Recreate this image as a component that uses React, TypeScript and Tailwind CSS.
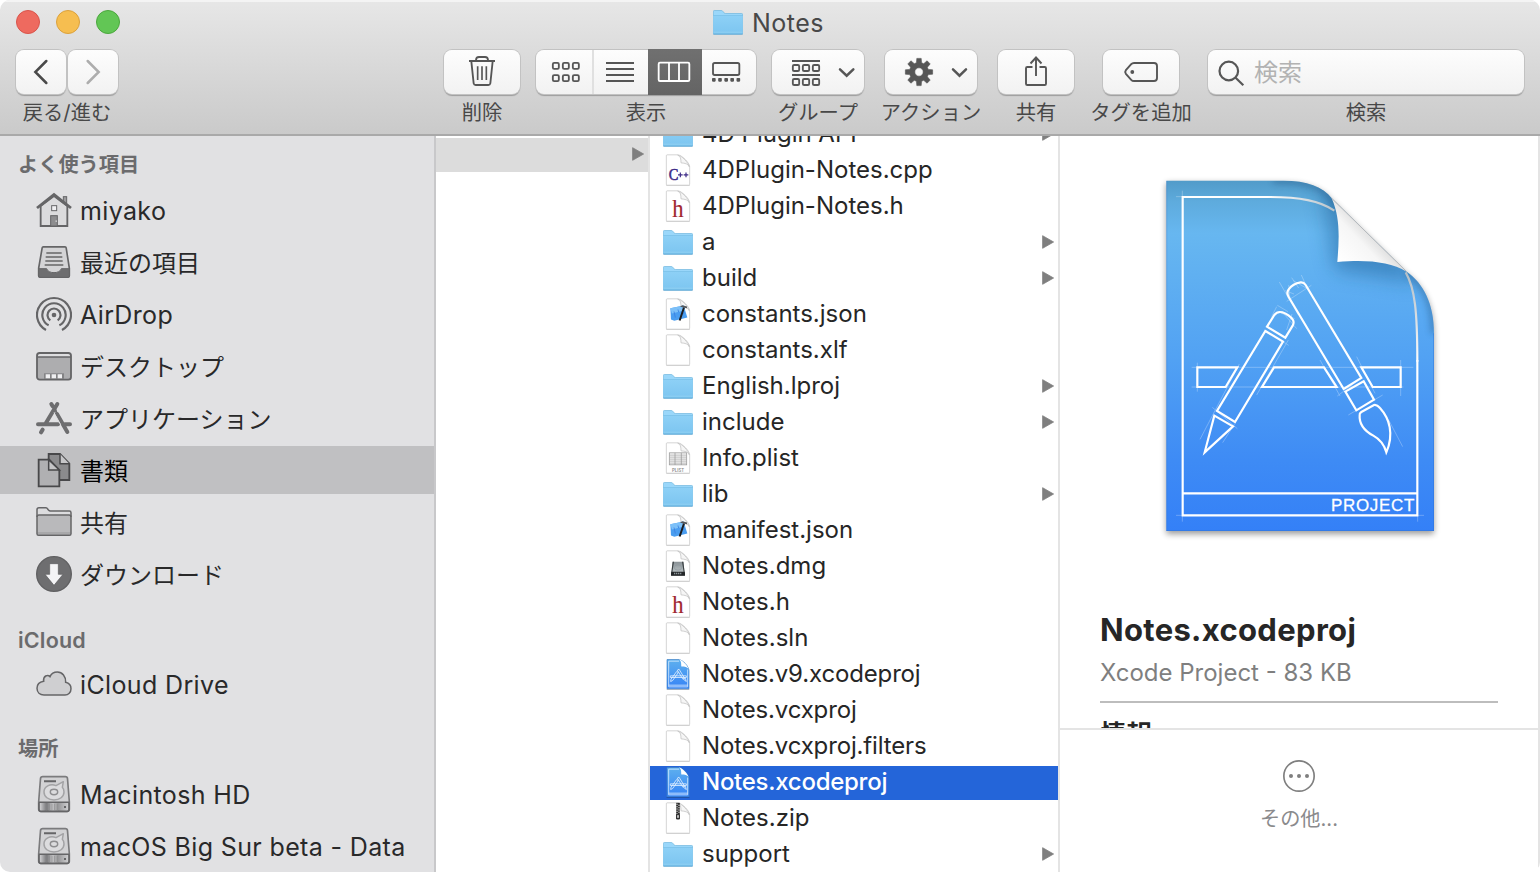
import React from "react";

type FileKind = "folder" | "cpp" | "h" | "json" | "blank" | "plist" | "dmg" | "xcode" | "zip";

const files: { name: string; kind: FileKind; selected?: boolean; tight?: boolean }[] = [
  { name: "4D Plugin API", kind: "folder" },
  { name: "4DPlugin-Notes.cpp", kind: "cpp" },
  { name: "4DPlugin-Notes.h", kind: "h" },
  { name: "a", kind: "folder" },
  { name: "build", kind: "folder" },
  { name: "constants.json", kind: "json" },
  { name: "constants.xlf", kind: "blank" },
  { name: "English.lproj", kind: "folder" },
  { name: "include", kind: "folder" },
  { name: "Info.plist", kind: "plist" },
  { name: "lib", kind: "folder" },
  { name: "manifest.json", kind: "json" },
  { name: "Notes.dmg", kind: "dmg" },
  { name: "Notes.h", kind: "h" },
  { name: "Notes.sln", kind: "blank" },
  { name: "Notes.v9.xcodeproj", kind: "xcode", tight: true },
  { name: "Notes.vcxproj", kind: "blank", tight: true },
  { name: "Notes.vcxproj.filters", kind: "blank", tight: true },
  { name: "Notes.xcodeproj", kind: "xcode", selected: true },
  { name: "Notes.zip", kind: "zip" },
  { name: "support", kind: "folder" },
];

function Defs() {
  return (
    <svg className="absolute h-0 w-0" aria-hidden="true">
      <defs>
        <linearGradient id="folderBody" x1="0" y1="0" x2="0" y2="1">
          <stop offset="0" stopColor="#8dd0f6" />
          <stop offset="1" stopColor="#7cc5f0" />
        </linearGradient>
        <linearGradient id="miniBlue" x1="0" y1="0" x2="0" y2="1">
          <stop offset="0" stopColor="#5eb0ee" />
          <stop offset="1" stopColor="#3583f6" />
        </linearGradient>
        <linearGradient id="driveMetal" x1="0" y1="0" x2="0" y2="1">
          <stop offset="0" stopColor="#8a9296" />
          <stop offset="0.7" stopColor="#b4bcbf" />
          <stop offset="1" stopColor="#4a4f52" />
        </linearGradient>
        <linearGradient id="driveBase" x1="0" y1="0" x2="1" y2="0">
          <stop offset="0" stopColor="#d6d6d8" />
          <stop offset="0.25" stopColor="#77777a" />
          <stop offset="0.45" stopColor="#c4c4c6" />
          <stop offset="0.65" stopColor="#99999b" />
          <stop offset="1" stopColor="#d0d0d2" />
        </linearGradient>
      </defs>
    </svg>
  );
}

function FolderShape() {
  return (
    <g>
      <rect x="1" y="84" width="88" height="4" rx="2" fill="#00000030" />
      <path d="M1 18Q1 15 4 15H25Q28 15 30 18L33 22Q35 24 38 24H86Q89 24 89 27V84Q89 86 87 86H3Q1 86 1 84Z" fill="#9ad7fa" stroke="#6bb3dd" strokeWidth="2" />
      <path d="M1 31H89V84Q89 86 87 86H3Q1 86 1 84Z" fill="url(#folderBody)" />
      <path d="M1 30H89" stroke="#74bce6" strokeWidth="2" />
      <path d="M2 80H88" stroke="#9bd4f5" strokeWidth="2" />
      <path d="M1 85.5H89" stroke="#62a9d4" strokeWidth="2" />
    </g>
  );
}

function MiniPage() {
  return (
    <g>
      <path d="M10 96H80" stroke="#00000030" strokeWidth="3" />
      <path d="M12 4H44C56 4 80 28 80 40V92Q80 95 77 95H12Q10 95 10 92V7Q10 4 12 4Z" fill="#fff" stroke="#c9c9c9" strokeWidth="2.4" />
      <path d="M44 5C53 8 54 16 54 28C66 29 76 31 79 40C78 30 56 5 44 5Z" fill="#f6f6f6" stroke="#c4c4c4" strokeWidth="2.4" />
    </g>
  );
}

function FileIcon({ kind }: { kind: FileKind }) {
  return (
    <svg className="h-9 w-[30px] shrink-0" viewBox="0 -1.5 90 108">
      {kind === "folder" && <FolderShape />}
      {kind !== "folder" && kind !== "xcode" && <MiniPage />}
      {kind === "cpp" && (
        <g>
          <text x="17" y="80" fontSize="47" fontFamily="Liberation Serif" fill="#3c2a86" stroke="#3c2a86" strokeWidth="1.500" textLength="29" lengthAdjust="spacingAndGlyphs">C</text>
          <path d="M45 64H59M52 57V71M62 64H76M69 57V71" stroke="#3c2a86" strokeWidth="3.500" />
        </g>
      )}
      {kind === "h" && (
        <text x="28" y="82" fontSize="73" fontFamily="Liberation Serif" fill="#a02630" stroke="#a02630" strokeWidth="0.500" textLength="34" lengthAdjust="spacingAndGlyphs">h</text>
      )}
      {kind === "json" && (
        <g>
          <path d="M22 32L62 24L73 60L34 70L24 66Z" fill="#4a9df0" />
          <path d="M22 32L62 24L66 38L27 48Z" fill="#7cc0f8" />
          <path d="M33 42L37 60M45 36L47 44M56 50L64 46" stroke="#3b7fe0" strokeWidth="2.500" />
          <path d="M63 30L50 69" stroke="#1c1c20" strokeWidth="6" />
          <path d="M51 27L58 23L72 27V32L60 30Z" fill="#55585c" />
        </g>
      )}
      {kind === "plist" && (
        <g>
          <rect x="19" y="34" width="52" height="36" fill="#f2f2f2" stroke="#9c9c9c" strokeWidth="2.400" />
          <path d="M19 41H71M19 47H71M19 53H71M19 59H71M19 65H71" stroke="#a9a9a9" strokeWidth="2" />
          <path d="M36 34V70M55 34V70" stroke="#8f8f8f" strokeWidth="2" />
          <text x="27" y="90" fontSize="14" fontFamily="Inter" fontWeight="600" fill="#8a8a8a" textLength="36" lengthAdjust="spacingAndGlyphs">PLIST</text>
        </g>
      )}
      {kind === "dmg" && (
        <g>
          <path d="M29 37H61L66 78H24Z" fill="url(#driveMetal)" />
          <path d="M29 37H33L28 68H25ZM61 37H57L62 68H65Z" fill="#3a4043" />
          <rect x="24" y="67" width="42" height="12" rx="2" fill="#25282a" />
          <path d="M33 72H56" stroke="#8c9498" strokeWidth="4" strokeDasharray="4 2" />
          <ellipse cx="45" cy="54" rx="11" ry="8" fill="none" stroke="#8d979d" strokeWidth="2" />
        </g>
      )}
      {kind === "zip" && (
        <g>
          <path d="M45 4V44" stroke="#2a2a2a" strokeWidth="11" />
          <path d="M42 7V44M48 10V44" stroke="#e2e2e2" strokeWidth="4" strokeDasharray="3 4" />
          <rect x="39" y="37" width="12" height="17" rx="4" fill="#333" />
          <rect x="43" y="41" width="4" height="8" fill="#fff" />
        </g>
      )}
      {kind === "xcode" && (
        <g>
          <path d="M11 96H79" stroke="#00000040" strokeWidth="3" />
          <path d="M12 6H48C60 8 78 27 78 40V94H12Z" fill="url(#miniBlue)" stroke="#3c7fc4" strokeWidth="2" />
          <path d="M48 6C56 12 54 18 55 27C65 27 74 28 77 36C76 26 56 6 48 6Z" fill="#fff" />
          <path d="M17 88V11H48M74 36V88H17M17 83H74" fill="none" stroke="#e8f4ff" strokeWidth="2.200" />
          <g fill="none" stroke="#e6f2ff" strokeWidth="2.400">
            <path d="M22 55H70V60H22ZM41 42L46 45L29 69L23 72L24 65Z" />
            <path d="M43 38L48 35L64 61L59 64ZM61 65L67 62L70 72Z" />
          </g>
        </g>
      )}
    </svg>
  );
}

function Triangle() {
  return (
    <svg className="mb-0.5 h-[14px] w-3 shrink-0" viewBox="0 0 12 14">
      <path d="M0.600 0.700L11.600 7L0.600 13.300Z" fill="#7f7f7f" stroke="#7f7f7f" strokeWidth="0.800" strokeLinejoin="round" />
    </svg>
  );
}

/* ---------- sidebar ---------- */

const S = "#656567";

function Drive() {
  return (
    <g>
      <path d="M20 20H88Q94 20 94.500 26L100 95V118Q100 124 94 124H14Q8 124 8 118V95L13.500 26Q14 20 20 20Z" fill="#d2d2d4" stroke="#7b7b7d" strokeWidth="5" />
      <rect x="10" y="99" width="88" height="24" fill="url(#driveBase)" />
      <path d="M8 97H100" stroke={S} strokeWidth="4.500" />
      <path d="M9 98V118Q9 124 15 124H93Q99 124 99 118V98" fill="none" stroke={S} strokeWidth="5" />
      <path d="M24 33.500H60" stroke={S} strokeWidth="6" />
      <path d="M82 35L60 47C42 40 24 50 24 66C24 80 37 90 54 90C71 90 84 80 84 66C84 60 82 55 79 52Z" fill="#dcdcde" stroke="#a3a3a5" strokeWidth="4.500" strokeLinejoin="round" />
      <ellipse cx="54" cy="66" rx="11" ry="8" fill="#dcdcde" stroke="#8e8e90" strokeWidth="4.500" />
      <path d="M32 101V122M40 101V122M48 101V122M56 101V122M64 101V122" stroke="#88888a" strokeWidth="2" />
      <rect x="84" y="108" width="6" height="6" fill={S} />
    </g>
  );
}

const sideIcons: Record<string, React.ReactNode> = {
  home: (
    <g>
      <rect x="82" y="32" width="10" height="24" fill="#9a9a9c" stroke={S} strokeWidth="3" />
      <path d="M14 60L54 30L94 60V120H14Z" fill="#dbdbdd" stroke={S} strokeWidth="5.500" />
      <path d="M3 66L54 26L105 66" fill="none" stroke={S} strokeWidth="8.500" />
      <rect x="47" y="59" width="15" height="15" fill="#f0f0f2" stroke={S} strokeWidth="3" />
      <rect x="44" y="89" width="20" height="31" fill="#8d8d8f" stroke={S} strokeWidth="3" />
      <rect x="59" y="103" width="3" height="5" fill="#e4e4e6" />
    </g>
  ),
  recents: (
    <g>
      <path d="M22 27H87Q90 27 90.500 30L100 91V113Q100 118 95 118H13Q8 118 8 113V91L18.500 30Q19 27 22 27Z" fill="#d4d4d6" stroke={S} strokeWidth="5" transform="translate(0 -0.500)" />
      <path d="M8 92H32C36 108 72 108 76 92H100V114Q100 118 96 118H12Q8 118 8 114Z" fill="#6e6e70" stroke={S} strokeWidth="3" />
      <path d="M31 45H77M29 57H79M28 69H80M26 81H82" stroke={S} strokeWidth="5" />
    </g>
  ),
  airdrop: (
    <g fill="none" stroke={S} strokeWidth="6.500">
      <circle cx="54" cy="75" r="7" fill={S} stroke="none" />
      <path d="M30 120A51 51 0 1 1 78 120M38 106A35 35 0 1 1 70 106M43 91A19.400 19.400 0 1 1 65 91" />
    </g>
  ),
  desktop: (
    <g>
      <rect x="3" y="33" width="102" height="80" rx="8" fill="#adadaf" />
      <path d="M3 45V41Q3 33 11 33H97Q105 33 105 41V45Z" fill="#dedee0" />
      <path d="M3 45H105" stroke={S} strokeWidth="4.500" />
      <rect x="3" y="33" width="102" height="80" rx="8" fill="none" stroke={S} strokeWidth="5.500" />
      <path d="M24 111V94H84V111Z" fill="#838385" />
      <path d="M29 97H42V109H29ZM47 97H60V109H47ZM65 97H78V109H65Z" fill="#efeff1" />
    </g>
  ),
  apps: (
    <g stroke="#6d6d6f" strokeWidth="12" strokeLinecap="round" fill="none">
      <path d="M64 30L28 90M46 30L50 37M6 91H66M86 91H102M20 107L15 115M63 60L94 114" />
      <path d="M59 48L63 62" strokeWidth="6" />
      <path d="M54 56L74 92" stroke="#e1e1e3" strokeWidth="3" strokeLinecap="butt" />
    </g>
  ),
  documents: (
    <g stroke="#48484a" strokeWidth="5.500">
      <path d="M38 24H72L100 53V102H38Z" fill="#8b8b8d" />
      <path d="M72 24V53H100" fill="#c6c6c8" strokeWidth="4.500" />
      <path d="M8 41H40L70 72V121H8Z" fill="#b0b0b2" />
      <path d="M38 41V72H70Z" fill="#c4c4c6" strokeWidth="4.500" />
    </g>
  ),
  folder: (
    <g>
      <path d="M3 35Q3 29 9 29H30Q33 29 35 33L38 37Q40 39 43 39H100Q105 39 105 44V107Q105 112 100 112H8Q3 112 3 107Z" fill="#dcdcde" />
      <path d="M3 52H105V112H3Z" fill="#b9b9bb" />
      <path d="M5 105H103" stroke="#a8a8aa" strokeWidth="6" />
      <path d="M3 57Q3 51 9 51H99Q105 51 105 57" fill="none" stroke={S} strokeWidth="4.500" />
      <path d="M3 35Q3 29 9 29H30Q33 29 35 33L38 37Q40 39 43 39H100Q105 39 105 44V107Q105 112 100 112H8Q3 112 3 107Z" fill="none" stroke={S} strokeWidth="4.500" />
    </g>
  ),
  download: (
    <g>
      <circle cx="54" cy="72" r="52" fill="#6e6e70" stroke="#606062" strokeWidth="4" />
      <path d="M41 41H67V73H81L54 106L27 73H41Z" fill="#f4f4f6" stroke="#5c5c5e" strokeWidth="2" />
    </g>
  ),
  cloud: (
    <path
      d="M24 105H87C97 105 105 97 105 86C105 76 98 69 89 67C90 50 79 36 64 36C54 36 46 41 42 50C38 46 33 46 29 48C24 51 22 57 23 64C11 66 3 73 3 85C3 97 12 105 24 105Z"
      fill="#cfcfd1"
      stroke={S}
      strokeWidth="4.500"
    />
  ),
  drive: <Drive />,
};

function SideItem({ icon, label, latin, selected }: { icon: string; label: string; latin?: boolean; selected?: boolean }) {
  return (
    <li className={`flex h-12 items-center gap-2 pl-9 ${selected ? "bg-[#c0c0c2] text-black" : "text-[#29292a]"}`}>
      <svg className="h-12 w-9 shrink-0" viewBox="0 0 108 144">{sideIcons[icon]}</svg>
      <span className={`whitespace-nowrap ${latin ? "pt-px text-[25px] leading-[30px] tracking-[0.36px]" : "pt-1 text-2xl leading-[30px]"}`}>
        {label}
      </span>
    </li>
  );
}

function SideHeading({ latin, children }: { latin?: boolean; children: React.ReactNode }) {
  return (
    <h2 className={`pl-[18px] pt-px font-semibold text-[#6b6b6d] ${latin ? "text-[21.5px] leading-[27px] tracking-[0.2px]" : "text-[20.2px] leading-[27px]"}`}>
      {children}
    </h2>
  );
}

function Sidebar() {
  return (
    <nav className="flex w-[436px] shrink-0 flex-col border-r-2 border-[#c8c8ca] bg-[#e1e1e3] pt-[14px]">
      <SideHeading>よく使う項目</SideHeading>
      <ul className="mt-2 flex flex-col gap-1">
        <SideItem icon="home" label="miyako" latin />
        <SideItem icon="recents" label="最近の項目" />
        <SideItem icon="airdrop" label="AirDrop" latin />
        <SideItem icon="desktop" label="デスクトップ" />
        <SideItem icon="apps" label="アプリケーション" />
        <SideItem icon="documents" label="書類" selected />
        <SideItem icon="folder" label="共有" />
        <SideItem icon="download" label="ダウンロード" />
      </ul>
      <div className="mt-7">
        <SideHeading latin>iCloud</SideHeading>
      </div>
      <ul className="mt-[6px]">
        <SideItem icon="cloud" label="iCloud Drive" latin />
      </ul>
      <div className="mt-[26px]">
        <SideHeading>場所</SideHeading>
      </div>
      <ul className="mt-2 flex flex-col gap-1">
        <SideItem icon="drive" label="Macintosh HD" latin />
        <SideItem icon="drive" label="macOS Big Sur beta - Data" latin />
      </ul>
    </nav>
  );
}

/* ---------- toolbar ---------- */

const BTN = "flex h-11 items-center rounded-lg bg-gradient-to-b from-[#fdfdfd] to-[#f2f2f2] shadow-[0_0_0_1px_#c2c2c2,0_2px_1px_#9d9d9d]";
const G = "#565656";

function Tool({ label, className, children }: { label: string; className: string; children: React.ReactNode }) {
  return (
    <div className={`flex shrink-0 flex-col items-center gap-[5px] ${className}`}>
      {children}
      <span className="whitespace-nowrap text-[20.3px] leading-6 text-[#484848] pt-0.5">{label}</span>
    </div>
  );
}

function gearPath() {
  let d = "";
  for (let i = 0; i < 8; i++) {
    const a = (i * Math.PI) / 4;
    const pt = (r: number, o: number) => `${(35 + r * Math.cos(a + o)).toFixed(2)} ${(22 + r * Math.sin(a + o)).toFixed(2)}`;
    d += `${i ? "L" : "M"}${pt(9.6, -0.27)}L${pt(13.8, -0.16)}L${pt(13.8, 0.16)}L${pt(9.6, 0.27)}`;
  }
  return d + "ZM39.200 22A4.200 4.200 0 1 0 30.800 22A4.200 4.200 0 1 0 39.200 22Z";
}

function Toolbar() {
  return (
    <header className="flex h-[136px] shrink-0 flex-col border-b-2 border-[#a9a9a9] bg-gradient-to-b from-[#e7e7e7] to-[#cacaca] shadow-[inset_0_2px_0_#f4f4f4]">
      <div className="flex h-[50px] shrink-0 justify-between pl-4">
        <div className="flex w-[104px] justify-between pt-[10px]">
          <i className="size-6 rounded-full border border-[#d9544b] bg-[#ee6a5f]" />
          <i className="size-6 rounded-full border border-[#dba13c] bg-[#f6be50]" />
          <i className="size-6 rounded-full border border-[#4ba73d] bg-[#62c655]" />
        </div>
        <div className="flex w-[827px] gap-[9px] pt-[5px]">
          <svg className="h-9 w-[30px]" viewBox="0 -1.5 90 108"><FolderShape /></svg>
          <span className="pt-0.5 text-[25px] leading-8 tracking-[0.5px] text-[#484848]">Notes</span>
        </div>
      </div>
      <div className="flex pl-4">
        <Tool label="戻る/進む" className="w-[102px]">
          <div className="flex gap-0.5">
            <div className={`${BTN} w-[50px]`}>
              <svg className="h-11 w-[50px]" viewBox="48 150 150 132">
                <path d="M139 183L106 216L139 249" fill="none" stroke="#4a4a4a" strokeWidth="7.500" strokeLinecap="round" />
              </svg>
            </div>
            <div className={`${BTN} w-[50px]`}>
              <svg className="h-11 w-[50px]" viewBox="204 150 150 132">
                <path d="M263 183L296 216L263 249" fill="none" stroke="#adadad" strokeWidth="7.500" strokeLinecap="round" />
              </svg>
            </div>
          </div>
        </Tool>
        <Tool label="削除" className="ml-[326px] w-[76px]">
          <div className={`${BTN} w-[76px]`}>
            <svg className="h-11 w-[76px]" viewBox="42 150 228 132" fill="none" stroke={G} strokeWidth="5.500">
              <path d="M117 183H195M124 184L131 250Q132 255 137 255H175Q180 255 181 250L188 184M138 181Q138 171 147 171H165Q174 171 174 181" />
              <path d="M143 199V240M156 199V240M169 199V240" strokeWidth="5" />
            </svg>
          </div>
        </Tool>
        <Tool label="表示" className="ml-4 w-[220px]">
          <div className={`${BTN} w-[220px]`}>
            <svg className="h-11 w-[58px] border-r-2 border-[#e0e0e0]" viewBox="318 150 168 132" fill="none" stroke={G} strokeWidth="5.500">
              {[367, 397, 427].map((x) => (
                <g key={x}>
                  <rect x={x + 1.5} y="188.500" width="18" height="18" rx="4" />
                  <rect x={x + 1.5} y="225.500" width="18" height="18" rx="4" />
                </g>
              ))}
            </svg>
            <svg className="h-11 w-[54px]" viewBox="492 150 162 132" fill="none" stroke={G} strokeWidth="6">
              <path d="M528 189H612M528 207H612M528 225H612M528 243H612" />
            </svg>
            <div className="my-[-1px] flex h-[46px] w-[54px] items-center bg-gradient-to-b from-[#707070] to-[#646464]">
              <svg className="h-11 w-[54px]" viewBox="654 150 162 132" fill="none" stroke="#fff" strokeWidth="5.500">
                <rect x="686" y="188" width="92" height="55" rx="4" />
                <path d="M717 188V243M747 188V243" />
              </svg>
            </div>
            <svg className="h-11 w-[54px]" viewBox="816 150 162 132" fill="none" stroke={G} strokeWidth="5.500">
              <rect x="849" y="189" width="79" height="36" rx="5" />
              {[846, 864.5, 883, 901, 919.5].map((x) => (
                <rect key={x} x={x} y="234" width="11" height="11" rx="2.500" fill={G} stroke="none" />
              ))}
            </svg>
          </div>
        </Tool>
        <Tool label="グループ" className="ml-4 w-[92px]">
          <div className={`${BTN} w-[92px]`}>
            <svg className="h-11 w-[92px]" viewBox="1026 150 276 132" fill="none" stroke={G} strokeWidth="5.500">
              <path d="M1086 183H1170M1086 225H1170" />
              {[1088.5, 1118.5, 1148.5].map((x) => (
                <g key={x}>
                  <rect x={x} y="195" width="19" height="18" rx="4" />
                  <rect x={x} y="237" width="19" height="18" rx="4" />
                </g>
              ))}
              <path d="M1230 208L1250 227L1270 208" strokeWidth="7.500" strokeLinecap="round" />
            </svg>
          </div>
        </Tool>
        <Tool label="アクション" className="ml-[21px] w-[92px]">
          <div className={`${BTN} w-[92px]`}>
            <svg className="h-11 w-[92px]" viewBox="1 0 92 44">
              <path d={gearPath()} fill={G} stroke={G} strokeWidth="0.600" fillRule="evenodd" strokeLinejoin="round" />
              <path d="M69 19.300L75.500 25.700L82 19.300" fill="none" stroke={G} strokeWidth="2.500" strokeLinecap="round" />
            </svg>
          </div>
        </Tool>
        <Tool label="共有" className="ml-[21px] w-[76px]">
          <div className={`${BTN} w-[76px]`}>
            <svg className="h-11 w-[76px]" viewBox="0 0 76 44" fill="none" stroke={G} strokeWidth="1.900">
              <path d="M34.500 17H29.300Q28 17 28 18.300V33.700Q28 35 29.300 35H46.700Q48 35 48 33.700V18.300Q48 17 46.700 17H41.500M38 26V7.500M32.500 13.500L38 7.500L43.500 13.500" />
            </svg>
          </div>
        </Tool>
        <Tool label="タグを追加" className="ml-[29px] w-[76px]">
          <div className={`${BTN} w-[76px]`}>
            <svg className="h-11 w-[76px]" viewBox="0 0 76 44" fill="none" stroke={G} strokeWidth="1.900">
              <path d="M31 13H51Q54 13 54 16V28Q54 31 51 31H31Q29.300 31 28.200 29.800L22.900 23.800Q21.500 22 22.900 20.200L28.200 14.200Q29.300 13 31 13Z" />
              <circle cx="29.300" cy="22" r="1.900" fill={G} stroke="none" />
            </svg>
          </div>
        </Tool>
        <Tool label="検索" className="ml-[29px] w-[316px]">
          <div className={`${BTN} w-[316px] gap-2`}>
            <svg className="h-11 w-[38px]" viewBox="0 0 38 44" fill="none" stroke={G} strokeWidth="2.200">
              <circle cx="20.800" cy="21" r="9.300" />
              <path d="M27.600 27.800L35.300 35.200" />
            </svg>
            <span className="pt-0.5 text-2xl leading-8 text-[#b2b2b2]">検索</span>
          </div>
        </Tool>
      </div>
    </header>
  );
}

/* ---------- preview ---------- */

function ProjectIcon() {
  return (
    <svg className="ml-20 mt-6 h-[390px] w-80 shrink-0" viewBox="0 0 960 1170">
      <defs>
        <linearGradient id="pageBlue" x1="0" y1="0" x2="0" y2="1">
          <stop offset="0" stopColor="#519bc9" />
          <stop offset="0.060" stopColor="#5eabdd" />
          <stop offset="0.150" stopColor="#67b7f0" />
          <stop offset="0.500" stopColor="#52a2f3" />
          <stop offset="0.800" stopColor="#3e8bf5" />
          <stop offset="1" stopColor="#3480f7" />
        </linearGradient>
        <linearGradient id="curl" gradientUnits="userSpaceOnUse" x1="600" y1="300" x2="700" y2="205">
          <stop offset="0" stopColor="#ffffff" />
          <stop offset="0.600" stopColor="#f6f6f6" />
          <stop offset="1" stopColor="#d6d6d6" />
        </linearGradient>
        <linearGradient id="frameTop" gradientUnits="userSpaceOnUse" x1="380" y1="0" x2="585" y2="0">
          <stop offset="0" stopColor="#ffffff" />
          <stop offset="1" stopColor="#b9c3ca" />
        </linearGradient>
        <linearGradient id="frameSide" gradientUnits="userSpaceOnUse" x1="0" y1="335" x2="0" y2="620">
          <stop offset="0" stopColor="#b4bec6" />
          <stop offset="1" stopColor="#ffffff" />
        </linearGradient>
        <clipPath id="pageClip">
          <path d="M79 62H430C500 62 550 80 575 115L800 335C850 370 882 430 882 520V1113H79Z" />
        </clipPath>
        <filter id="soft" x="-20%" y="-20%" width="140%" height="140%">
          <feGaussianBlur stdDeviation="9" />
        </filter>
        <filter id="wide" x="-50%" y="-50%" width="200%" height="200%">
          <feGaussianBlur stdDeviation="28" />
        </filter>
      </defs>
      <path d="M79 70H430C500 70 550 88 575 123L800 343C850 378 882 438 882 528V1122H79Z" fill="#000" opacity="0.400" filter="url(#soft)" />
      <path d="M79 62H430C500 62 550 80 575 115L800 335C850 370 882 430 882 520V1113H79Z" fill="url(#pageBlue)" />
      <g clipPath="url(#pageClip)">
        <path d="M540 60L585 330L840 370L800 300L600 80Z" fill="#1c5f96" opacity="0.500" filter="url(#wide)" />
        <path d="M400 62C500 62 550 80 575 115L590 140M800 335C850 370 882 430 882 520" fill="none" stroke="#2a5f8c" strokeWidth="20" opacity="0.450" filter="url(#soft)" />
        <path d="M79 1112H882M80 62V1113M881 520V1113" stroke="#2f74d4" strokeWidth="3" opacity="0.500" fill="none" />
      </g>
      <path d="M575 115C602 175 597 240 592 306C680 298 750 305 800 335Z" fill="url(#curl)" />
      <path d="M575 115L800 335" stroke="#b5b5b5" strokeWidth="2.500" />
      <g fill="none" stroke="#fff" strokeWidth="6.500">
        <path d="M390 111H128V1066H832V600M128 1000H832" />
        <path d="M385 111C480 111 540 122 583 152" stroke="url(#frameTop)" />
        <path d="M797 337C825 385 832 455 832 605" stroke="url(#frameSide)" />
      </g>
      <g stroke="#fff" strokeWidth="2" opacity="0.400" fill="none">
        <path d="M108 110H128M127 92V112M108 1066H128M127 1066V1085M832 1066H852M833 1066V1085" />
        <path d="M155 622H820M155 681H790M172 608V695M782 600V708M418 366L475 465M484 345L496 372M514 376L440 424M455 353L476 384M412 436L444 455M410 440L395 470M374 510L446 556M445 540L350 705M298 612L180 838M217 742L292 806M285 790L248 848M540 600L600 708M592 708L640 672M625 765L728 705M745 778L788 860M650 590L705 700M456 462L440 510M464 476L425 460M432 462L470 506M446 375L450 420M460 362L500 385M436 392L462 402" />
      </g>
      <g fill="none" stroke="#fff" strokeWidth="6.500" strokeLinejoin="miter">
        <path d="M292 622H172V681H257ZM402 622H552L590 681H366ZM664 622H782V681H698Z" />
        <path d="M376 513L429 545L285 786L231 753Z" />
        <path d="M381 500L403 465Q412 453 427 457Q448 464 459 480Q463 488 458 497L436 533Z" />
        <path d="M223 767L279 799L194 877Z" />
        <path d="M446 411Q438 397 447 387Q458 371 482 367Q491 366 497 375L664 654L611 687Z" />
        <path d="M616 695L671 664L702 719L649 751Z" />
        <path d="M659 765Q658 760 664 756L702 735Q711 733 720 744C748 775 763 822 739 877C733 855 720 838 700 827C674 813 657 791 659 765Z" />
      </g>
      <text x="573" y="1053" fontSize="51" fontFamily="Liberation Sans" fill="#fff" stroke="#fff" strokeWidth="0.800" textLength="250">PROJECT</text>
    </svg>
  );
}

function Preview() {
  return (
    <section className="flex w-[480px] shrink-0 flex-col border-r-2 border-[#e4e4e4] bg-white">
      <div className="flex h-[594px] shrink-0 flex-col overflow-hidden border-b-2 border-[#e4e4e4]">
        <ProjectIcon />
        <div className="mx-10 h-[153px] shrink-0 border-b-2 border-[#bdbdbd] pt-[60px]">
          <h1 className="text-[31px] font-bold leading-10 tracking-[0.32px] text-[#262626]">Notes.xcodeproj</h1>
          <p className="mt-[7px] whitespace-nowrap text-2xl leading-8 text-[#7f7f7f]">Xcode Project - 83 KB</p>
        </div>
        <h3 className="ml-10 mt-[14px] shrink-0 text-[26px] font-bold leading-9 text-[#262626]">情報</h3>
      </div>
      <div className="flex flex-col items-center pt-[30px]">
        <svg className="size-8" viewBox="0 0 96 96">
          <circle cx="48" cy="48" r="45.500" fill="none" stroke="#7f7f7f" strokeWidth="5" />
          <circle cx="24" cy="48" r="6" fill="#7f7f7f" />
          <circle cx="48" cy="48" r="6" fill="#7f7f7f" />
          <circle cx="72" cy="48" r="6" fill="#7f7f7f" />
        </svg>
        <span className="mt-[13px] text-[20.2px] leading-7 text-[#8a8a8c]">その他...</span>
      </div>
    </section>
  );
}

export default function App() {
  return (
    <div className="h-[872px] w-[1540px] overflow-hidden bg-white font-['Inter','Noto_Sans_CJK_JP',sans-serif]">
      <Defs />
      <div className="flex h-full w-full flex-col overflow-hidden rounded-[10px] bg-white">
        <Toolbar />
        <main className="flex min-h-0 flex-1 overflow-hidden">
          <Sidebar />
          <section className="w-[214px] shrink-0 border-r-2 border-[#e4e4e4] pt-0.5">
            <div className="flex h-[34px] items-center justify-end bg-[#dcdcdc] pr-1">
              <Triangle />
            </div>
          </section>
          <section className="w-[410px] shrink-0 overflow-hidden border-r-2 border-[#e4e4e4]">
            <ul className="mt-[-19px]">
              {files.map((f) => (
                <li key={f.name} className="h-9 py-px">
                  <div
                    className={`flex h-[34px] items-center pl-[13px] pr-1 ${
                      f.selected ? "bg-[#2465d9] font-medium tracking-[-0.27px] text-white" : "text-[#262626]"
                    } ${f.tight ? "tracking-[-0.15px]" : ""}`}
                  >
                    <FileIcon kind={f.kind} />
                    <span className="ml-[9px] flex-1 whitespace-nowrap pb-0.5 text-2xl leading-[30px]">{f.name}</span>
                    {f.kind === "folder" && <Triangle />}
                  </div>
                </li>
              ))}
            </ul>
          </section>
          <Preview />
        </main>
      </div>
    </div>
  );
}
